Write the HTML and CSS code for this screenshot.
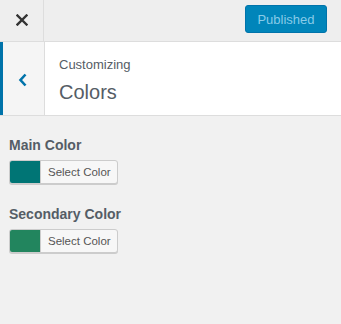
FILE: index.html
```html
<!DOCTYPE html>
<html lang="en">
<head>
  <meta charset="UTF-8" />
  <title>Customizing Colors</title>
  <link rel="stylesheet" href="styles.css">
</head>
<body>
  <div class="topbar">
    <div class="close">
      <svg width="12" height="12" viewBox="0 0 12 12"><path d="M1.5 1.5 L10.5 10.5 M10.5 1.5 L1.5 10.5" stroke="#333" stroke-width="2.4" stroke-linecap="square"/></svg>
    </div>
    <button class="publish">Published</button>
  </div>

  <div class="header">
    <div class="back">
      <svg width="9" height="14" viewBox="0 0 9 14"><path d="M7.5 1.5 L2.5 7 L7.5 12.5" fill="none" stroke="#0073aa" stroke-width="2.6"/></svg>
    </div>
    <div class="title">
      <div class="small">Customizing</div>
      <div class="big">Colors</div>
    </div>
  </div>

  <div class="controls">
    <div class="control">
      <div class="label">Main Color</div>
      <div class="picker"><span class="swatch" style="background:#007575"></span><span class="pick-text">Select Color</span></div>
    </div>
    <div class="control">
      <div class="label">Secondary Color</div>
      <div class="picker"><span class="swatch" style="background:#22855e"></span><span class="pick-text">Select Color</span></div>
    </div>
  </div>
</body>
</html>
```

FILE: styles.css
```css
body { margin: 0; background: #f1f1f1; font-family: "Liberation Sans", Arial, sans-serif; color: #444; }
.topbar { height: 41px; display: flex; align-items: center; justify-content: space-between; background: #eee; border-bottom: 1px solid #ddd; }
.close { width: 44px; height: 41px; border-right: 1px solid #ddd; display: flex; align-items: center; justify-content: center; box-sizing: border-box; padding-bottom: 2px; }
.publish { margin-right: 14px; margin-top: -3px; width: 82px; height: 28px; background: #0085ba; border: 1px solid #0073aa; border-radius: 3px; color: #88cbe8; font-family: inherit; font-size: 13px; padding: 0; }
.header { display: flex; height: 73px; background: #fff; border-bottom: 1px solid #ddd; }
.back { width: 45px; box-sizing: border-box; background: #f5f5f5; border-left: 3px solid #0073aa; border-right: 1px solid #ddd; display: flex; align-items: center; justify-content: center; padding-right: 3px; padding-top: 2px; }
.title { padding: 15px 0 0 14px; }
.small { font-size: 13px; color: #555d66; line-height: 16px; }
.big { font-size: 20px; color: #555d66; line-height: 24px; margin-top: 7px; }
.controls { padding: 20px 9px 0; }
.control { margin-bottom: 18px; }
.label { font-size: 14px; font-weight: bold; color: #555d66; line-height: 18px; margin-bottom: 6px; }
.picker { display: inline-flex; height: 24px; box-sizing: border-box; border: 1px solid #ccc; border-radius: 3px; background: #f7f7f7; overflow: hidden; box-shadow: 0 1px 0 #ccc; }
.swatch { width: 30px; }
.pick-text { font-size: 11.5px; color: #555; padding: 0 6px 0 7px; line-height: 22px; border-left: 1px solid #ccc; }
```
